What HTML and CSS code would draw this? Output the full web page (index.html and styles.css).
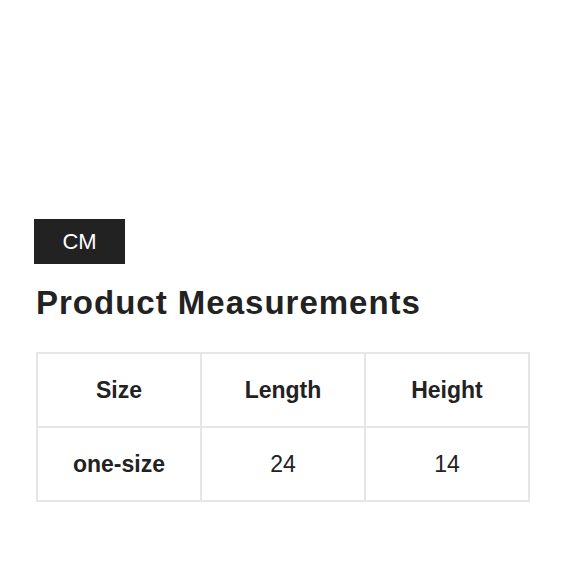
FILE: index.html
```html
<!DOCTYPE html>
<html>
<head>
<meta charset="utf-8">
<link rel="stylesheet" href="styles.css">
</head>
<body>
<div class="page">
  <div class="unit">CM</div>
  <h1 class="title">Product Measurements</h1>
  <table class="sizes">
    <tr>
      <th>Size</th>
      <th>Length</th>
      <th>Height</th>
    </tr>
    <tr>
      <th>one-size</th>
      <td>24</td>
      <td>14</td>
    </tr>
  </table>
</div>
</body>
</html>
```

FILE: styles.css
```css
html, body {
  margin: 0;
  padding: 0;
  background: #ffffff;
}
.page {
  padding: 219px 0 0 34px;
  font-family: "Liberation Sans", Arial, sans-serif;
  color: #222222;
}
.unit {
  width: 91px;
  height: 45px;
  background: #222222;
  color: #ffffff;
  font-size: 22px;
  display: flex;
  align-items: center;
  justify-content: center;
}
.title {
  margin: 19px 0 0 2px;
  font-size: 33px;
  line-height: 40px;
  font-weight: bold;
  letter-spacing: 1px;
}
.sizes {
  margin: 29px 0 0 2px;
  border-collapse: collapse;
  width: 494px;
}
.sizes th, .sizes td {
  border: 2px solid #e6e6e6;
  height: 72px;
  width: 33.33%;
  padding: 0;
  text-align: center;
  font-size: 23px;
}
.sizes th {
  font-weight: bold;
}
.sizes td {
  font-weight: normal;
}
```
